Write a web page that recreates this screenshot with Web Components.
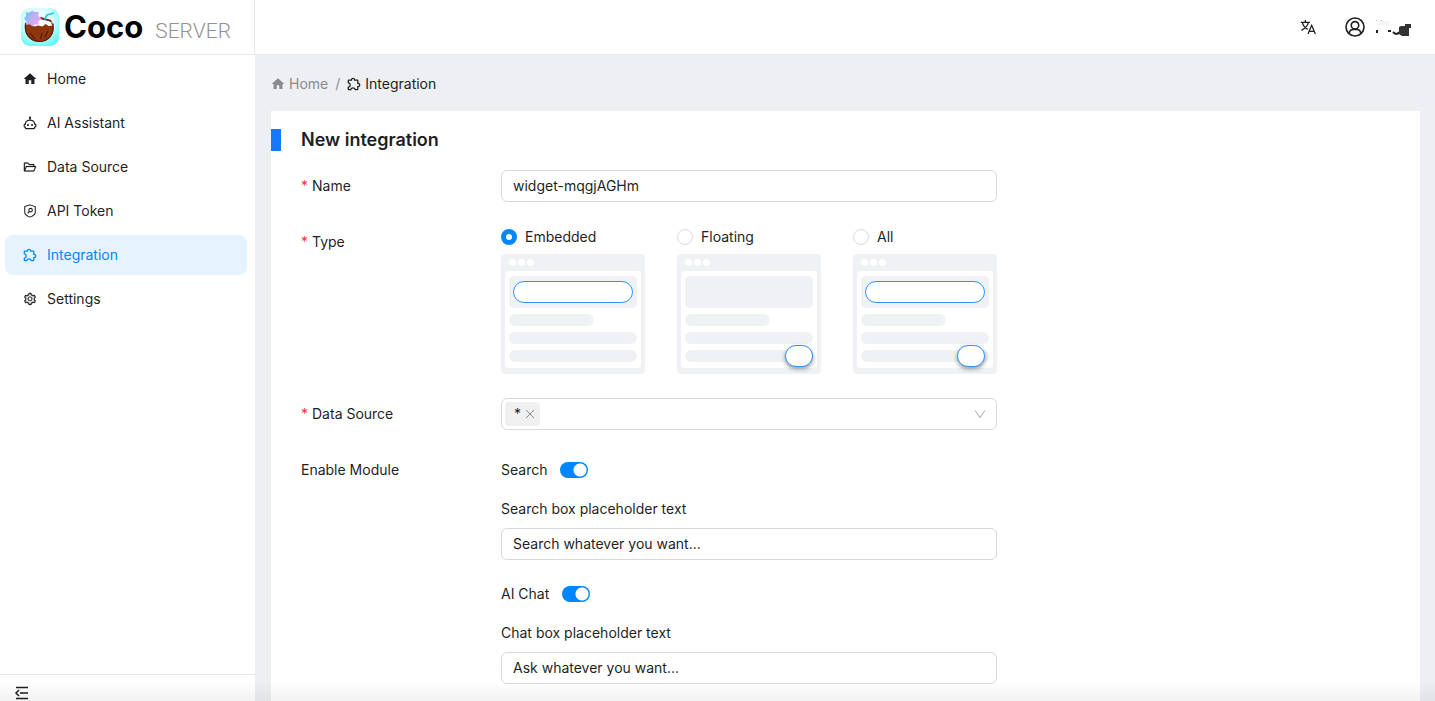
<!DOCTYPE html>
<html lang="en">
<head>
<meta charset="utf-8">
<meta name="viewport" content="width=device-width, initial-scale=1">
<title>Coco Server - New integration</title>
<style>
  html, body { margin: 0; height: 100%; }
  body {
    font: 14px/22px Inter, "Liberation Sans", sans-serif;
    color: #1f1f1f;
    background: #eeeff3;
    overflow: hidden;
    --primary: #0087ff;
    --line: #e6e7eb;
    --border: #d9d9d9;
  }
</style>
</head>
<body>
<coco-app></coco-app>

<script>
const define = (name, markup, setup) => {
  const template = document.createElement('template');
  template.innerHTML = markup;
  customElements.define(name, class extends HTMLElement {
    connectedCallback() {
      if (this.shadowRoot) return;
      this.attachShadow({ mode: 'open' }).append(template.content.cloneNode(true));
      if (setup) setup(this.shadowRoot, this);
    }
  });
};

const icons = {
  home: ['1 1 22 22', '<path fill="currentColor" d="M10 20v-6h4v6h5v-8h3L12 3L2 12h3v8z"/>'],
  robot: ['0 0 24 24', '<g fill="none" stroke="currentColor" stroke-width="2"><path d="M4 14a8 7 0 0 1 16 0h.5a1.5 1.5 0 0 1 1.5 1.5v2a1.5 1.5 0 0 1-1.5 1.5H20v1a1.5 1.5 0 0 1-1.5 1.5h-13A1.5 1.5 0 0 1 4 20v-1h-.5A1.5 1.5 0 0 1 2 17.5v-2A1.5 1.5 0 0 1 3.5 14zM12 7V3"/></g><circle cx="12" cy="3" r="2" fill="currentColor"/><circle cx="8.5" cy="15.5" r="1.8" fill="currentColor"/><circle cx="15.5" cy="15.5" r="1.8" fill="currentColor"/>'],
  folder: ['0 0 1024 1024', '<path fill="currentColor" stroke="currentColor" stroke-width="16" d="M928 444H820V330.4c0-17.7-14.3-32-32-32H473L355.7 186.2a8.15 8.15 0 00-5.5-2.2H96c-17.7 0-32 14.3-32 32v592c0 17.7 14.3 32 32 32h698c13 0 24.8-7.9 29.7-20l134-332c1.5-3.8 2.3-7.9 2.3-12 0-17.7-14.3-32-32-32zM136 256h188.5l119.6 114.4H748V444H238c-13 0-24.8 7.9-29.7 20L136 643.2V256zm635.3 512H159l103.3-256h612.4L771.3 768z"/>'],
  shield: ['0 0 24 24', '<g fill="none" stroke="currentColor" stroke-width="1.8"><path d="M12 1.5l9 3v10c0 3-3 5.5-9 8-6-2.5-9-5-9-8v-10z"/><circle cx="13" cy="10.5" r="3"/><path d="M11 12.5l-3 3.5"/></g>'],
  puzzle: ['1 1 22 22', '<path fill="currentColor" d="M22 13.5c0 1.76-1.3 3.22-3 3.46V20a2 2 0 0 1-2 2h-3.8v-.3a2.7 2.7 0 0 0-2.7-2.7c-1.5 0-2.7 1.21-2.7 2.7v.3H4a2 2 0 0 1-2-2v-3.8h.3c1.49 0 2.7-1.21 2.7-2.7c0-1.5-1.21-2.7-2.7-2.7H2V7a2 2 0 0 1 2-2h3.04C7.28 3.3 8.74 2 10.5 2s3.22 1.3 3.46 3H17a2 2 0 0 1 2 2v3.04c1.7.24 3 1.7 3 3.46M17 15h1.5a1.5 1.5 0 0 0 1.5-1.5a1.5 1.5 0 0 0-1.5-1.5H17V7h-5V5.5A1.5 1.5 0 0 0 10.5 4A1.5 1.5 0 0 0 9 5.5V7H4v2.12c1.76.68 3 2.38 3 4.38s-1.25 3.7-3 4.38V20h2.12a4.7 4.7 0 0 1 4.38-3c2 0 3.7 1.25 4.38 3H17z"/>'],
  gear: ['0 0 1024 1024', '<path fill="currentColor" d="M924.8 625.7l-65.5-56c3.1-19 4.7-38.4 4.7-57.8s-1.6-38.8-4.7-57.8l65.5-56a32.03 32.03 0 009.3-35.2l-.9-2.6a443.74 443.74 0 00-79.7-137.9l-1.8-2.1a32.12 32.12 0 00-35.1-9.5l-81.3 28.9c-30-24.6-63.5-44-99.7-57.6l-15.7-85a32.05 32.05 0 00-25.8-25.7l-2.7-.5c-52.1-9.4-106.9-9.4-159 0l-2.7.5a32.05 32.05 0 00-25.8 25.7l-15.8 85.4a351.86 351.86 0 00-99 57.4l-81.9-29.1a32 32 0 00-35.1 9.5l-1.8 2.1a446.02 446.02 0 00-79.7 137.9l-.9 2.6c-4.5 12.5-.8 26.5 9.3 35.2l66.3 56.6c-3.1 18.8-4.6 38-4.6 57.1 0 19.2 1.5 38.4 4.6 57.1L99 625.5a32.03 32.03 0 00-9.3 35.2l.9 2.6c18.1 50.4 44.9 96.9 79.7 137.9l1.8 2.1a32.12 32.12 0 0035.1 9.5l81.9-29.1c29.8 24.5 63.1 43.9 99 57.4l15.8 85.4a32.05 32.05 0 0025.8 25.7l2.7.5a449.4 449.4 0 00159 0l2.7-.5a32.05 32.05 0 0025.8-25.7l15.7-85a350 350 0 0099.7-57.6l81.3 28.9a32 32 0 0035.1-9.5l1.8-2.1c34.8-41.1 61.6-87.5 79.7-137.9l.9-2.6c4.5-12.3.8-26.3-9.3-35zM788.3 465.9c2.5 15.1 3.8 30.6 3.8 46.1s-1.3 31-3.8 46.1l-6.6 40.1 74.7 63.9a370.03 370.03 0 01-42.6 73.6L721 702.8l-31.4 25.8c-23.9 19.6-50.5 35-79.3 45.8l-38.1 14.3-17.9 97a377.5 377.5 0 01-85 0l-17.9-97.2-37.8-14.5c-28.5-10.8-55-26.2-78.7-45.7l-31.4-25.9-93.4 33.2c-17-22.9-31.2-47.6-42.6-73.6l75.5-64.5-6.5-40c-2.4-14.9-3.7-30.3-3.7-45.5 0-15.3 1.2-30.6 3.7-45.5l6.5-40-75.5-64.5c11.3-26.1 25.6-50.7 42.6-73.6l93.4 33.2 31.4-25.9c23.7-19.5 50.2-34.9 78.7-45.7l37.9-14.3 17.9-97.2c28.1-3.2 56.8-3.2 85 0l17.9 97 38.1 14.3c28.7 10.8 55.4 26.2 79.3 45.8l31.4 25.8 92.8-32.9c17 22.9 31.2 47.6 42.6 73.6L781.8 426l6.5 39.9zM512 326c-97.2 0-176 78.8-176 176s78.8 176 176 176 176-78.8 176-176-78.8-176-176-176zm79.2 255.2A111.6 111.6 0 01512 614c-29.9 0-58-11.7-79.2-32.8A111.6 111.6 0 01400 502c0-29.9 11.7-58 32.8-79.2C454 401.6 482.1 390 512 390c29.9 0 58 11.6 79.2 32.8A111.6 111.6 0 01624 502c0 29.9-11.7 58-32.8 79.2z" stroke="currentColor" stroke-width="16"/>'],
  translate: ['0 0 24 24', '<g fill="none" stroke="currentColor" stroke-width="1.9"><path d="M1 5h14M8 1.5V5M3.5 5c1 4.5 4.5 8.5 8 10.5M12.5 5c-1 5-5 9.5-10.5 12M12 22.5l5.5-13 5.5 13M14 18.5h7"/></g>'],
  user: ['0 0 24 24', '<g fill="none" stroke="currentColor" stroke-width="1.9"><circle cx="12" cy="12" r="10.8"/><circle cx="12" cy="10" r="4.5"/><path d="M5 19.5c.5-3 2.5-4.5 5-4.5h4c2.5 0 4.5 1.5 5 4.5"/></g>'],
  fold: ['0 0 16 16', '<path fill="none" stroke="currentColor" stroke-width="1.5" d="M2 2.5h12M6 8h8M2 13.5h12M5 5L2 8l3 3"/>'],
  close: ['0 0 10 10', '<path fill="none" stroke="currentColor" d="M1 1l8 8M9 1L1 9"/>'],
  chevron: ['0 0 12 12', '<path fill="none" stroke="currentColor" stroke-width="1.1" d="M1 2.5l5 7 5-7"/>']
};

define('app-icon', `
  <style>
    :host { display: block; flex: none; width: 14px; height: 14px; }
    svg { display: block; width: 100%; height: 100%; }
  </style>
  <svg aria-hidden="true"></svg>`, (root, host) => {
  const [box, shapes] = icons[host.getAttribute('name')];
  const svg = root.querySelector('svg');
  svg.setAttribute('viewBox', box);
  svg.innerHTML = shapes;
});

define('brand-logo', `
  <style>
    :host { display: flex; align-items: center; gap: 4px; }
    svg { display: block; width: 40px; height: 40px; }
    .name { font: 700 31px/40px Inter, sans-serif; color: #000; }
    .kind { font: 300 21px/40px Roboto, sans-serif; color: #929292; margin: 8px 0 0 8px; }
  </style>
  <svg viewBox="0 0 40 40" aria-hidden="true">
    <defs>
      <radialGradient id="tile" cx=".45" cy=".35" r=".8"><stop offset="0" stop-color="#fff"/><stop offset=".5" stop-color="#d4fcff"/><stop offset="1" stop-color="#3ff5ee"/></radialGradient>
      <linearGradient id="flower" x1="0" y1="0" x2="1" y2=".6"><stop offset="0" stop-color="#62c4f5"/><stop offset=".5" stop-color="#b9b0f2"/><stop offset="1" stop-color="#f0a6ee"/></linearGradient>
    </defs>
    <rect x="1" y="1" width="38" height="38" rx="9" fill="url(#tile)"/>
    <path d="M5.5 16.5Q19 14 33 17C34.5 27 29 34.5 19.5 34.5S4 27 5.5 16.5z" fill="#8f360c" stroke="#4d1a08" stroke-width="1.2"/>
    <path d="M11 18l4-4 8-3 7 3.5 2.5 4-4 .5-3-2-3 2.5-4-1-4 1z" fill="#fff"/>
    <path d="M19 11.5l2-1.5 5 1.5 5 1.5 1.5 3-4-2-5-1z" fill="#6d260c"/>
    <path d="M22 26l-1.5 6M28 24l-3 6M10 26l5 6" stroke="#4d1a08" stroke-width="1.1" fill="none"/>
    <path d="M24.5 12.5l2.5-4.5 7-2" stroke="#22c6ea" stroke-width="1.7" fill="none"/>
    <path d="M12 4.5l2.5 1.5 3.5-.5-.5 3.5 3 3-3 2.5.5 2.5-3.5-.5-2 2-2.5-2-3.5.5.5-3-2-2.5 2-2.5-.5-3 3.5.5z" fill="url(#flower)" stroke="url(#flower)" stroke-width="1.5" stroke-linejoin="round"/>
  </svg>
  <span class="name">Coco</span><span class="kind">SERVER</span>`);

define('top-bar', `
  <style>
    :host { display: flex; height: 54px; background: #fff; border-bottom: 1px solid var(--line); }
    .brand { box-sizing: border-box; width: 255px; padding-left: 20px; display: flex; align-items: center; border-right: 1px solid var(--line); }
    .tools { flex: 1; display: flex; align-items: center; justify-content: flex-end; padding-right: 22px; }
    button { display: flex; align-items: center; gap: 10px; padding: 0; border: 0; background: none; color: inherit; }
    .lang { margin-right: 29px; }
    .lang app-icon { width: 16px; height: 16px; }
    .user app-icon { width: 20px; height: 20px; }
    .mask { display: block; width: 38px; height: 20px; }
  </style>
  <div class="brand"><brand-logo></brand-logo></div>
  <div class="tools">
    <button class="lang" type="button" aria-label="Language"><app-icon name="translate"></app-icon></button>
    <button class="user" type="button" aria-label="Account">
      <app-icon name="user"></app-icon>
      <svg class="mask" viewBox="0 0 38 20" aria-hidden="true">
        <path d="M4 4h10v4H4z" fill="#f5f5f5"/>
        <path d="M1 3h1v1H1zM6 3h1v1H6z" fill="#bbb"/>
        <path d="M1 13h2v3H1zM13 13h3v2h-3z" fill="#222"/>
        <path d="M18 15q4 4 6 0" fill="none" stroke="#222" stroke-width="2"/>
        <path d="M24 10l2-1h4V7h6v4h-2v8h-7l-3-2z" fill="#333"/>
      </svg>
    </button>
  </div>`);

define('nav-item', `
  <style>
    :host { display: block; }
    a { display: flex; align-items: center; gap: 10px; height: 40px; padding: 0 18px; border-radius: 8px; color: inherit; text-decoration: none; }
    :host([active]) a { background: #e6f3ff; color: var(--primary); }
  </style>
  <a href="#"><slot></slot></a>`, (root, host) => {
  const icon = document.createElement('app-icon');
  icon.setAttribute('name', host.getAttribute('icon'));
  const link = root.querySelector('a');
  link.prepend(icon);
  if (host.hasAttribute('active')) link.setAttribute('aria-current', 'page');
});

define('side-nav', `
  <style>
    :host { display: flex; flex-direction: column; width: 255px; background: #fff; }
    nav { flex: 1; display: flex; flex-direction: column; gap: 4px; padding: 4px 8px 4px 5px; }
    footer { height: 26px; padding: 0 14px; border-top: 1px solid var(--line); display: flex; align-items: flex-end; }
    button { display: block; padding: 0; border: 0; background: none; color: inherit; }
    button app-icon { width: 16px; height: 16px; }
  </style>
  <nav>
    <nav-item icon="home">Home</nav-item>
    <nav-item icon="robot">AI Assistant</nav-item>
    <nav-item icon="folder">Data Source</nav-item>
    <nav-item icon="shield">API Token</nav-item>
    <nav-item icon="puzzle" active>Integration</nav-item>
    <nav-item icon="gear">Settings</nav-item>
  </nav>
  <footer><button type="button" aria-label="Collapse menu"><app-icon name="fold"></app-icon></button></footer>`);

define('bread-crumb', `
  <style>
    :host { display: block; }
    nav { display: flex; align-items: center; gap: 7px; }
    a, span { display: flex; align-items: center; gap: 4px; color: inherit; text-decoration: none; }
    a, .sep { color: #8a8b8e; }
  </style>
  <nav aria-label="Breadcrumb">
    <a href="#"><app-icon name="home"></app-icon>Home</a>
    <span class="sep">/</span>
    <span aria-current="page"><app-icon name="puzzle"></app-icon>Integration</span>
  </nav>`);

define('form-row', `
  <style>
    :host { display: grid; grid-template-columns: 200px minmax(0, 496px); }
    .label { line-height: 32px; }
    :host([required]) .label::before { content: "*"; color: #ff2d3a; margin-right: 4px; }
  </style>
  <div class="label"><slot name="label"></slot></div>
  <div><slot></slot></div>`);

define('page-preview', `
  <style>
    :host { display: block; position: relative; box-sizing: border-box; width: 144px; height: 120px; padding: 5px 4px 6px; border-radius: 4px; background: #f0f1f5; }
    .dots { display: flex; gap: 2px; height: 12px; padding-left: 4px; }
    .dots i { width: 7px; height: 7px; border-radius: 50%; background: #fff; }
    .page { box-sizing: border-box; height: 97px; padding: 5px 4px; border-radius: 4px; background: #fff; display: flex; flex-direction: column; gap: 6px; }
    .hero { box-sizing: border-box; height: 32px; padding: 5px 4px; border-radius: 5px; background: #f0f1f5; }
    .line { height: 12px; border-radius: 6px; background: #f0f1f5; }
    .short { width: 85px; }
    .search, .float { display: none; box-sizing: border-box; height: 22px; border: 1px solid #2b92ff; border-radius: 11px; background: #fff; }
    :host([search]) .search { display: block; }
    :host([float]) .float { display: block; position: absolute; right: 8px; bottom: 7px; width: 28px; box-shadow: 0 2px 4px #0006; }
    :host([float][search]) .float { right: 12px; }
  </style>
  <div class="dots"><i></i><i></i><i></i></div>
  <div class="page">
    <div class="hero"><div class="search"></div></div>
    <div class="line short"></div><div class="line"></div><div class="line"></div>
  </div>
  <div class="float"></div>`);

define('integration-form', `
  <style>
    :host { display: block; background: #fff; padding-top: 18px; }
    h1 { display: flex; align-items: center; gap: 20px; height: 22px; margin: 0 0 19px; font-size: 18px; font-weight: 600; }
    h1::before { content: ""; width: 10px; height: 22px; background: #1677ff; }
    form { display: flex; flex-direction: column; gap: 24px; padding: 0 30px 24px; }
    input, select { font: inherit; color: inherit; margin: 0; }
    input[type=text], select { display: block; box-sizing: border-box; width: 100%; height: 32px; padding: 0 11px 2px; border: 1px solid var(--border); border-radius: 6px; background: #fff; }
    .types { display: flex; gap: 32px; }
    .types label { display: flex; flex-direction: column; gap: 6px; }
    .types span { display: flex; align-items: center; gap: 8px; }
    input[type=radio] { appearance: none; width: 16px; height: 16px; border: 1px solid var(--border); border-radius: 50%; background: #fff; }
    input[type=radio]:checked { border: 5px solid var(--primary); }
    .select { display: grid; align-items: center; }
    .select > * { grid-area: 1 / 1; }
    select { appearance: none; }
    .tag { justify-self: start; display: flex; align-items: center; gap: 4px; height: 24px; margin-left: 4px; padding: 0 5px 0 9px; border-radius: 4px; background: #f0f0f0; }
    .tag button { padding: 0; border: 0; background: none; color: #8a8a8a; }
    .tag app-icon { width: 10px; height: 10px; }
    .arrow { justify-self: end; margin-right: 11px; width: 12px; height: 12px; color: #b8b8b8; pointer-events: none; }
    .module { display: flex; flex-direction: column; }
    .module + .module { margin-top: 18px; }
    .toggle { display: flex; align-items: center; gap: 13px; height: 32px; margin-bottom: 12px; }
    .caption { margin-bottom: 8px; }
    input[type=checkbox] { appearance: none; width: 28px; height: 16px; border-radius: 8px; background: radial-gradient(circle at 20px 8px, #fff 6px, var(--primary) 7px); }
  </style>
  <h1>New integration</h1>
  <form>
    <form-row required><label slot="label" for="name">Name</label><input id="name" type="text" value="widget-mqgjAGHm"></form-row>
    <form-row required>
      <span slot="label" id="type">Type</span>
      <div class="types" role="radiogroup" aria-labelledby="type">
        <label><span><input type="radio" name="type" checked>Embedded</span><page-preview search></page-preview></label>
        <label><span><input type="radio" name="type">Floating</span><page-preview float></page-preview></label>
        <label><span><input type="radio" name="type">All</span><page-preview search float></page-preview></label>
      </div>
    </form-row>
    <form-row required>
      <label slot="label" for="source">Data Source</label>
      <div class="select">
        <select id="source"><option></option></select>
        <span class="tag">*<button type="button" aria-label="Remove"><app-icon name="close"></app-icon></button></span>
        <app-icon class="arrow" name="chevron"></app-icon>
      </div>
    </form-row>
    <form-row>
      <span slot="label">Enable Module</span>
      <div class="module">
        <div class="toggle"><label for="search">Search</label><input id="search" type="checkbox" role="switch" checked></div>
        <label class="caption" for="search-text">Search box placeholder text</label>
        <input id="search-text" type="text" value="Search whatever you want...">
      </div>
      <div class="module">
        <div class="toggle"><label for="chat">AI Chat</label><input id="chat" type="checkbox" role="switch" checked></div>
        <label class="caption" for="chat-text">Chat box placeholder text</label>
        <input id="chat-text" type="text" value="Ask whatever you want...">
      </div>
    </form-row>
  </form>`);

define('coco-app', `
  <style>
    :host { display: flex; flex-direction: column; height: 100vh; }
    .body { flex: 1; min-height: 0; display: flex; }
    main { flex: 1; min-width: 0; box-sizing: border-box; overflow: hidden; padding: 18px 15px 0 16px; display: flex; flex-direction: column; gap: 16px; }
    integration-form { flex: 1 0 auto; }
    .fade { position: fixed; left: 0; right: 0; bottom: 0; height: 20px; pointer-events: none; background: linear-gradient(#0000, #0000000d); }
  </style>
  <top-bar></top-bar>
  <div class="body">
    <side-nav></side-nav>
    <main><bread-crumb></bread-crumb><integration-form></integration-form></main>
  </div>
  <div class="fade"></div>`);
</script>
</body>
</html>
